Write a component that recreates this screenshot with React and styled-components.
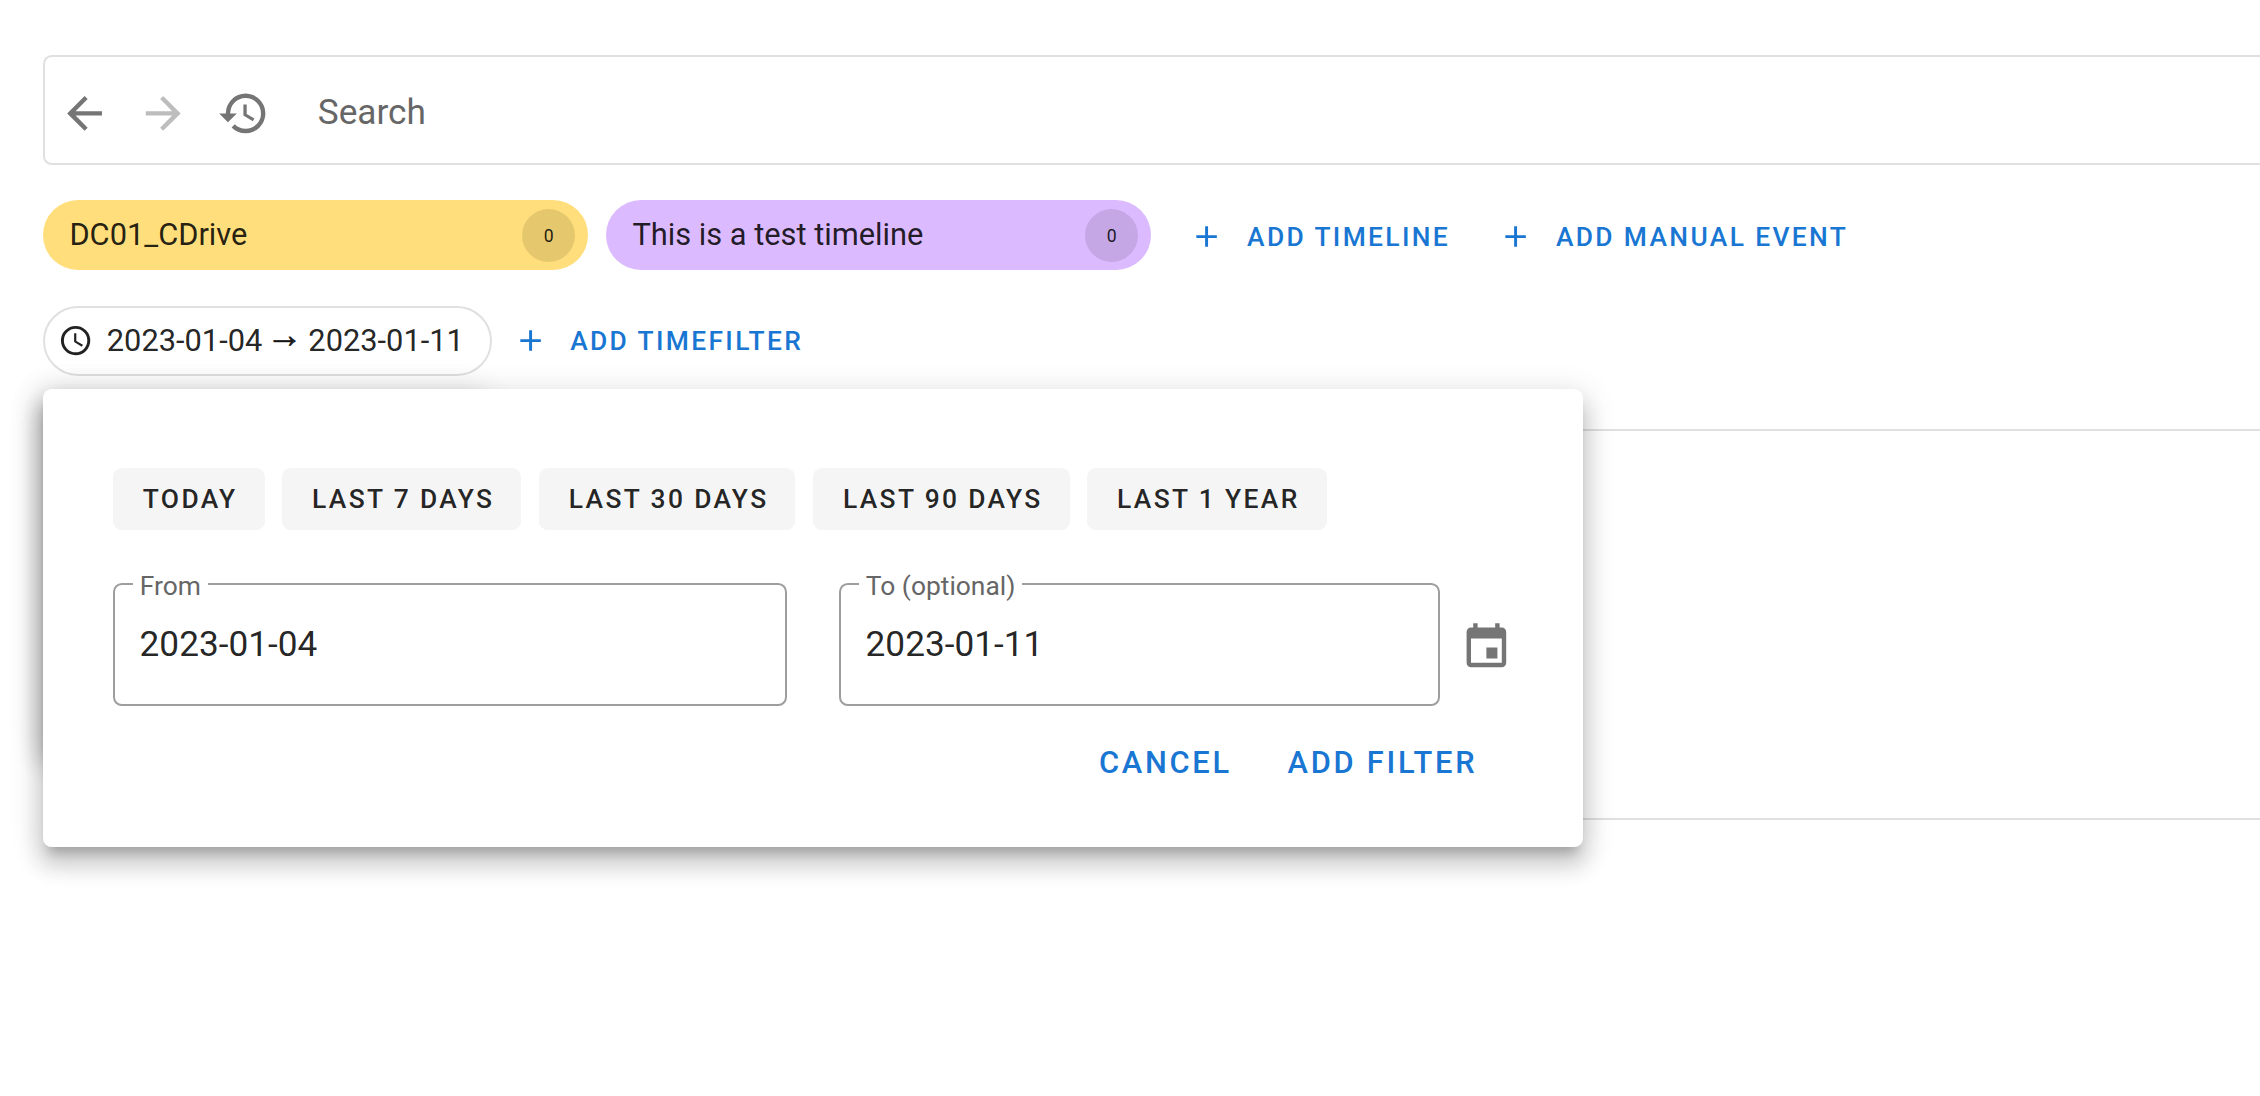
import React from "react";
import styled, { createGlobalStyle } from "styled-components";

const GlobalStyle = createGlobalStyle`
  *, *::before, *::after { box-sizing: border-box; }
  body { margin: 0; background: #fff; overflow: hidden; }
  button { font: inherit; border: 0; background: none; padding: 0; }
`;

const Page = styled.div`
  position: relative;
  height: 1096px;
  overflow: hidden;
  padding: 55px 0 0 43px;
  font-family: Roboto, "Liberation Sans", sans-serif;
  font-size: 35.2px;
  color: rgba(0, 0, 0, 0.87);
  white-space: nowrap;
`;

const Glyph = styled.svg`
  display: block;
  flex: none;
  width: ${(p) => p.$size}px;
  height: ${(p) => p.$size}px;
  fill: currentColor;
`;

const ICONS = {
  back: "M20,11V13H8L13.5,18.5L12.08,19.92L4.16,12L12.08,4.08L13.5,5.5L8,11H20Z",
  forward: "M4,11V13H16L10.5,18.5L11.92,19.92L19.84,12L11.92,4.08L10.5,5.5L16,11H4Z",
  history:
    "M13.5,8H12V13L16.28,15.54L17,14.33L13.5,12.25V8M13,3A9,9 0 0,0 4,12H1L4.96,16.03L9,12H6A7,7 0 0,1 13,5A7,7 0 0,1 20,12A7,7 0 0,1 13,19C11.07,19 9.32,18.21 8.06,16.94L6.64,18.36C8.27,20 10.5,21 13,21A9,9 0 0,0 22,12A9,9 0 0,0 13,3",
  clock:
    "M12,20A8,8 0 0,0 20,12A8,8 0 0,0 12,4A8,8 0 0,0 4,12A8,8 0 0,0 12,20M12,2A10,10 0 0,1 22,12A10,10 0 0,1 12,22C6.47,22 2,17.5 2,12A10,10 0 0,1 12,2M12.5,7V12.25L17,14.92L16.25,16.15L11,13V7H12.5Z",
  plus: "M19,13H13V19H11V13H5V11H11V5H13V11H19V13Z",
  calendar:
    "M19,19H5V8H19M16,1V3H8V1H6V3H5C3.89,3 3,3.89 3,5V19A2,2 0 0,0 5,21H19A2,2 0 0,0 21,19V5C21,3.89 20.1,3 19,3H18V1M17,12H12V17H17V12Z",
};

const Icon = ({ name, size }) => (
  <Glyph viewBox="0 0 24 24" $size={size} aria-hidden="true">
    <path d={ICONS[name]} />
  </Glyph>
);

const SearchBar = styled.div`
  display: flex;
  align-items: center;
  height: 110px;
  padding-left: 13.4px;
  border: 2px solid #e0e0e0;
  border-right: 0;
  border-radius: 8.8px 0 0 8.8px;
`;

const IconButton = styled.button`
  display: block;
  margin-right: ${(p) => p.$gap || 0}px;
  padding-top: 6px;
  height: 60px;
  color: ${(p) => (p.$disabled ? "#bdbdbd" : "#757575")};
`;

const Placeholder = styled.span`
  padding-top: 3px;
  color: #666;
  line-height: 44px;
`;

const TimelineRow = styled.div`
  display: flex;
  align-items: center;
  height: 70px;
  margin-top: 35px;
`;

const TimelineChip = styled.div`
  display: flex;
  align-items: center;
  justify-content: space-between;
  width: 545.4px;
  height: 70px;
  margin-right: 17.6px;
  padding: 0 13.2px 2px 26.4px;
  border-radius: 35px;
  background: ${(p) => p.$color};
  font-size: 30.8px;
`;

const Count = styled.span`
  display: flex;
  align-items: center;
  justify-content: center;
  width: 53px;
  height: 53px;
  margin-top: 3px;
  border-radius: 50%;
  background: rgba(0, 0, 0, 0.1);
  font-size: 17.6px;
`;

const TextButton = styled.button`
  display: flex;
  align-items: center;
  gap: ${(p) => p.$gap || 0}px;
  margin-left: ${(p) => p.$left || 0}px;
  padding-top: ${(p) => p.$drop || 0}px;
  color: #1976d2;
  font-size: ${(p) => (p.$large ? 30.8 : 26.4)}px;
  font-weight: 500;
  letter-spacing: 0.0892857em;
  text-transform: uppercase;
`;

const FilterRow = styled.div`
  display: flex;
  align-items: center;
  height: 70px;
  margin-top: 36px;
`;

const TimeChip = styled.div`
  display: flex;
  align-items: center;
  gap: 13.4px;
  width: 449px;
  height: 70px;
  padding-left: 13.2px;
  border: 2px solid #e0e0e0;
  border-radius: 35px;
  font-size: 30.8px;
`;

const Range = styled.span`
  line-height: 36px;
  padding-bottom: 1px;
`;

const Arrow = styled.span`
  display: inline-block;
  width: 30.8px;
  font-family: "Liberation Sans", sans-serif;
  font-size: 36px;
  line-height: 0;
  text-indent: -3.2px;
  vertical-align: 4px;
  -webkit-text-stroke: 0.8px currentColor;
`;

const ResultsCard = styled.div`
  height: 391px;
  margin-top: 53px;
  border: 2px solid #e0e0e0;
  border-right: 0;
  border-radius: 8.8px 0 0 8.8px;
`;

const Popup = styled.div`
  position: absolute;
  left: 43px;
  top: 389px;
  width: ${(p) => p.$width}px;
  height: ${(p) => p.$height}px;
  border-radius: 8.8px;
  background: #fff;
  box-shadow:
    0 11px 11px -6.6px rgba(0, 0, 0, 0.2),
    0 17.6px 22px 2.2px rgba(0, 0, 0, 0.14),
    0 6.6px 30.8px 4.4px rgba(0, 0, 0, 0.12);
`;

const FilterForm = styled.div`
  display: flex;
  flex-direction: column;
  padding: 79px 70px 0;
`;

const Presets = styled.div`
  display: flex;
  gap: 17.6px;
`;

const Preset = styled.button`
  height: 62px;
  padding: 0 27px 0 29.8px;
  border-radius: 8.8px;
  background: #f5f5f5;
  color: rgba(0, 0, 0, 0.87);
  font-size: 26.4px;
  font-weight: 500;
  letter-spacing: 0.0892857em;
  text-transform: uppercase;
`;

const Fields = styled.div`
  display: flex;
  height: 134px;
  margin-top: 42px;
`;

const Field = styled.fieldset`
  width: ${(p) => p.$width}px;
  height: 134px;
  min-width: 0;
  margin: 0 ${(p) => p.$after}px 0 0;
  padding: 0 0 0 18px;
  border: 2px solid #9e9e9e;
  border-radius: 8.8px;
`;

const Legend = styled.legend`
  height: 24px;
  padding: 0 7px 0 6.8px;
  color: #666;
  font-size: 26.4px;
  line-height: 29px;
`;

const Value = styled.div`
  padding: 26px 0 0 6.6px;
  line-height: 44px;
`;

const CalendarButton = styled.button`
  align-self: flex-start;
  margin-top: 49px;
  color: #757575;
`;

const Actions = styled.div`
  display: flex;
  justify-content: flex-end;
  margin-top: 38px;
  padding-right: 35.6px;
`;

const PRESETS = ["Today", "Last 7 days", "Last 30 days", "Last 90 days", "Last 1 year"];

export default function App() {
  return (
    <Page>
      <GlobalStyle />
      <SearchBar>
        <IconButton $gap={25.4}>
          <Icon name="back" size={52.8} />
        </IconButton>
        <IconButton $gap={27.2} $disabled>
          <Icon name="forward" size={52.8} />
        </IconButton>
        <IconButton $gap={48.4}>
          <Icon name="history" size={52.8} />
        </IconButton>
        <Placeholder>Search</Placeholder>
      </SearchBar>

      <TimelineRow>
        <TimelineChip $color="#ffde7b">
          DC01_CDrive<Count>0</Count>
        </TimelineChip>
        <TimelineChip $color="#dcbaff">
          This is a test timeline<Count>0</Count>
        </TimelineChip>
        <TextButton $left={20.5} $gap={22.4} $drop={4}>
          <Icon name="plus" size={35.2} />
          Add timeline
        </TextButton>
        <TextButton $left={48.2} $gap={22.4} $drop={4}>
          <Icon name="plus" size={35.2} />
          Add manual event
        </TextButton>
      </TimelineRow>

      <FilterRow>
        <TimeChip>
          <Icon name="clock" size={35.2} />
          <Range>
            2023-01-04 <Arrow>→</Arrow> 2023-01-11
          </Range>
        </TimeChip>
        <TextButton $left={20.6} $gap={22.4}>
          <Icon name="plus" size={35.2} />
          Add timefilter
        </TextButton>
      </FilterRow>

      <ResultsCard />

      <Popup $width={440} $height={359} />
      <Popup $width={1540} $height={458}>
        <FilterForm>
          <Presets>
            {PRESETS.map((label) => (
              <Preset key={label}>{label}</Preset>
            ))}
          </Presets>
          <Fields>
            <Field $width={674} $after={52}>
              <Legend>From</Legend>
              <Value>2023-01-04</Value>
            </Field>
            <Field $width={601} $after={19.6}>
              <Legend>To (optional)</Legend>
              <Value>2023-01-11</Value>
            </Field>
            <CalendarButton>
              <Icon name="calendar" size={52.8} />
            </CalendarButton>
          </Fields>
          <Actions>
            <TextButton $large>Cancel</TextButton>
            <TextButton $large $left={55.6}>
              Add filter
            </TextButton>
          </Actions>
        </FilterForm>
      </Popup>
    </Page>
  );
}
